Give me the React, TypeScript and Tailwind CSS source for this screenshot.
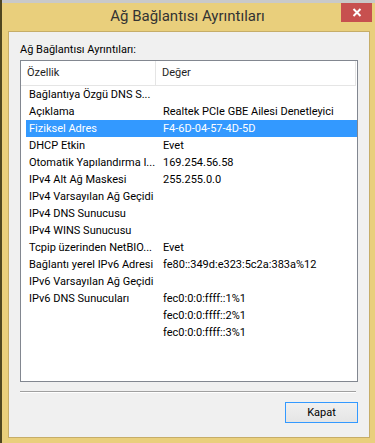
const rows: [string, string][] = [
  ['Bağlantıya Özgü DNS S...', ''],
  ['Açıklama', 'Realtek PCIe GBE Ailesi Denetleyici'],
  ['Fiziksel Adres', 'F4-6D-04-57-4D-5D'],
  ['DHCP Etkin', 'Evet'],
  ['Otomatik Yapılandırma I...', '169.254.56.58'],
  ['IPv4 Alt Ağ Maskesi', '255.255.0.0'],
  ['IPv4 Varsayılan Ağ Geçidi', ''],
  ['IPv4 DNS Sunucusu', ''],
  ['IPv4 WINS Sunucusu', ''],
  ['Tcpip üzerinden NetBIO...', 'Evet'],
  ['Bağlantı yerel IPv6 Adresi', 'fe80::349d:e323:5c2a:383a%12'],
  ['IPv6 Varsayılan Ağ Geçidi', ''],
  ['IPv6 DNS Sunucuları', 'fec0:0:0:ffff::1%1'],
  ['', 'fec0:0:0:ffff::2%1'],
  ['', 'fec0:0:0:ffff::3%1'],
]

export default function App() {
  return (
    <div className="flex w-[375px] h-[443px] overflow-hidden bg-[#e9cf7c] font-['Roboto','Liberation_Sans',sans-serif]">
      {/* desktop edge behind the window */}
      <div className="w-[2px] h-full bg-[#4f4620]" />

      <div className="flex flex-1 flex-col">
        <div className="h-[3px] bg-[#c9c9c9]" />

        {/* Title bar */}
        <div className="relative flex h-[28px] items-center justify-center pr-[2px]">
          <span className="text-[15px] leading-none text-[#333] pb-[1px]">Ağ Bağlantısı Ayrıntıları</span>
          <div className="absolute right-[3px] top-0 flex h-[19px] w-[31px] items-center justify-center bg-[#c7504f]">
            <svg width="10" height="9" viewBox="0 0 10 9">
              <path d="M1.5 1l7 7M8.5 1l-7 7" stroke="white" strokeWidth="2" />
            </svg>
          </div>
        </div>

        {/* Client area */}
        <div className="ml-[6px] mr-[5px] mb-[5px] flex flex-1 flex-col border border-[#c6ad68] bg-[#f0f0f0] px-[11px] pt-[10px] text-[11px] text-black">
          <div className="h-[15px] leading-[15px]">Ağ Bağlantısı Ayrıntıları:</div>

          <div className="mt-[3px] h-[322px] border border-[#828790] bg-white">
            <div className="flex h-[25px] w-[335px] border-b border-r border-[#e5e5e5] leading-[24px] text-[#1e1e1e]">
              <div className="w-[135px] border-r border-[#e5e5e5] pl-[6px]">Özellik</div>
              <div className="pl-[6px]">Değer</div>
            </div>
            <div className="pl-[5px]">
              {rows.map(([name, value], i) => (
                <div
                  key={i}
                  className={
                    i === 2
                      ? 'flex h-[17px] leading-[17px] bg-[#3399ff] text-white'
                      : 'flex h-[17px] leading-[17px]'
                  }
                >
                  <div className="w-[134px] shrink-0 whitespace-nowrap pl-[3px]">{name}</div>
                  <div className="whitespace-nowrap pl-[3px]">{value}</div>
                </div>
              ))}
            </div>
          </div>

          <div className="mt-[9px] h-[1px] w-[336px] bg-[#a0a0a0]" />
          <div className="h-[1px] w-[336px] bg-white" />

          <div className="mt-[9px] flex justify-end">
            <button className="h-[21px] w-[73px] border border-[#3399ff] bg-gradient-to-b from-[#f0f0f0] to-[#e5e5e5] text-[11px] leading-none text-black">
              Kapat
            </button>
          </div>
        </div>
      </div>
    </div>
  )
}
